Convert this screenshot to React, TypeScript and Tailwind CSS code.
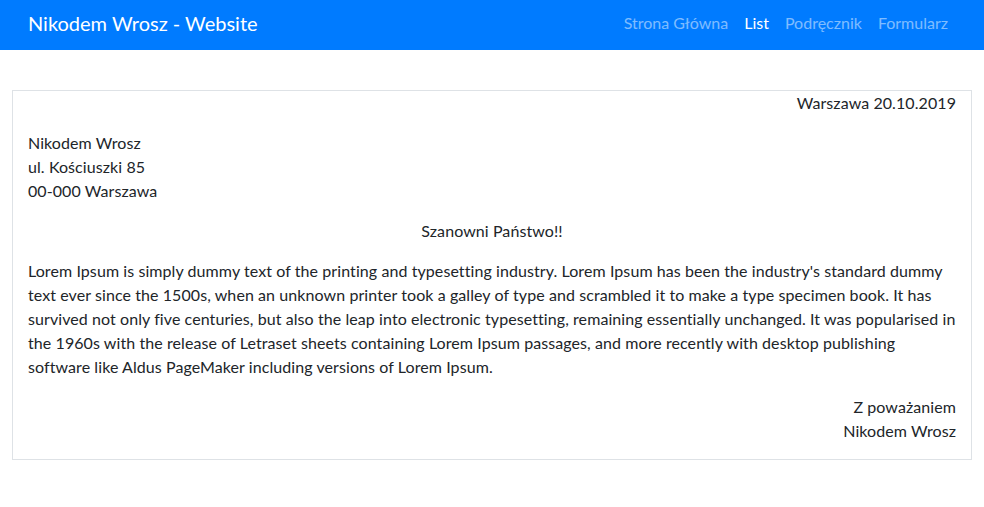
import React from "react";

const links = [
  { label: "Strona Główna", active: false },
  { label: "List", active: true },
  { label: "Podręcznik", active: false },
  { label: "Formularz", active: false },
];

export default function App() {
  return (
    <div className="min-h-screen bg-white text-[#212529] font-['Lato','Liberation_Sans',sans-serif] text-base leading-6">
      <nav className="flex h-[50px] items-center justify-between bg-[#007bff] px-[28px] pb-[5px]">
        <a className="text-[20px] leading-[30px] text-white">Nikodem Wrosz - Website</a>
        <ul className="flex">
          {links.map((link) => (
            <li key={link.label}>
              <a
                className={
                  link.active
                    ? "block px-2 py-2 text-white"
                    : "block px-2 py-2 text-white/50"
                }
              >
                {link.label}
              </a>
            </li>
          ))}
        </ul>
      </nav>

      <div className="mx-3 mt-10 border border-[#dee2e6] px-[15px] tracking-[0.08px]">
        <p className="mb-4 text-right">Warszawa 20.10.2019</p>
        <p className="mb-4">
          Nikodem Wrosz
          <br />
          ul. Kościuszki 85
          <br />
          00-000 Warszawa
        </p>
        <p className="mb-4 text-center">Szanowni Państwo!!</p>
        <p className="mb-4">
          Lorem Ipsum is simply dummy text of the printing and typesetting industry. Lorem Ipsum has been
          the industry's standard dummy text ever since the 1500s, when an unknown printer took a galley of
          type and scrambled it to make a type specimen book. It has survived not only five centuries, but
          also the leap into electronic typesetting, remaining essentially unchanged. It was popularised in
          the 1960s with the release of Letraset sheets containing Lorem Ipsum passages, and more recently
          with desktop publishing software like Aldus PageMaker including versions of Lorem Ipsum.
        </p>
        <p className="mb-4 text-right">
          Z poważaniem
          <br />
          Nikodem Wrosz
        </p>
      </div>
    </div>
  );
}
